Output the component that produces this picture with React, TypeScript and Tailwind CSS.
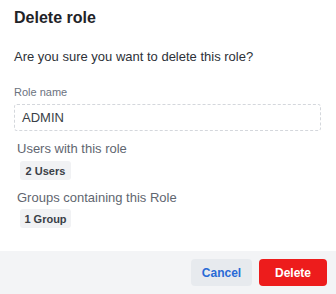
const App = () => {
  return (
    <div
      className="w-[336px] h-[294px] bg-white flex flex-col"
      style={{ fontFamily: "'Liberation Sans', Arial, sans-serif" }}
    >
      <div className="flex-1 pl-[14px] pr-[15px]">
        <h1 className="pt-[8px] text-[16px] leading-[20px] font-bold text-[#1f2328]">
          Delete role
        </h1>
        <p className="mt-[20px] text-[13px] leading-[18px] text-[#2d3138]">
          Are you sure you want to delete this role?
        </p>
        <p className="mt-[19px] text-[11px] leading-[14px] text-[#6b7280]">
          Role name
        </p>
        <div className="mt-[5px] h-[27px] border border-dashed border-[#d4d7dc] rounded-[3px] flex items-center px-[7px] text-[13px] text-[#3a3f47]">
          ADMIN
        </div>
        <div className="pl-[3px]">
          <p className="mt-[9px] text-[13px] leading-[18px] text-[#5f6670]">
            Users with this role
          </p>
          <div className="mt-[3px] ml-[3px] flex items-center justify-center w-[51px] h-[19px] rounded-[3px] bg-[#f1f2f4] text-[11px] leading-[14px] font-bold text-[#3a3f47]">
            2 Users
          </div>
          <p className="mt-[9px] text-[13px] leading-[18px] text-[#5f6670]">
            Groups containing this Role
          </p>
          <div className="mt-[2px] ml-[3px] flex items-center justify-center w-[51px] h-[19px] rounded-[3px] bg-[#f1f2f4] text-[11px] leading-[14px] font-bold text-[#3a3f47]">
            1 Group
          </div>
        </div>
      </div>
      <div className="h-[43px] bg-[#f3f4f6] flex items-center justify-end gap-[7px] pr-[9px]">
        <button className="w-[61px] h-[27px] rounded-[4px] bg-[#e7eaee] text-[12px] font-bold text-[#2a6bd6]">
          Cancel
        </button>
        <button className="w-[68px] h-[27px] rounded-[4px] bg-[#ed1c1c] text-[12px] font-bold text-white">
          Delete
        </button>
      </div>
    </div>
  );
};

export default App;
